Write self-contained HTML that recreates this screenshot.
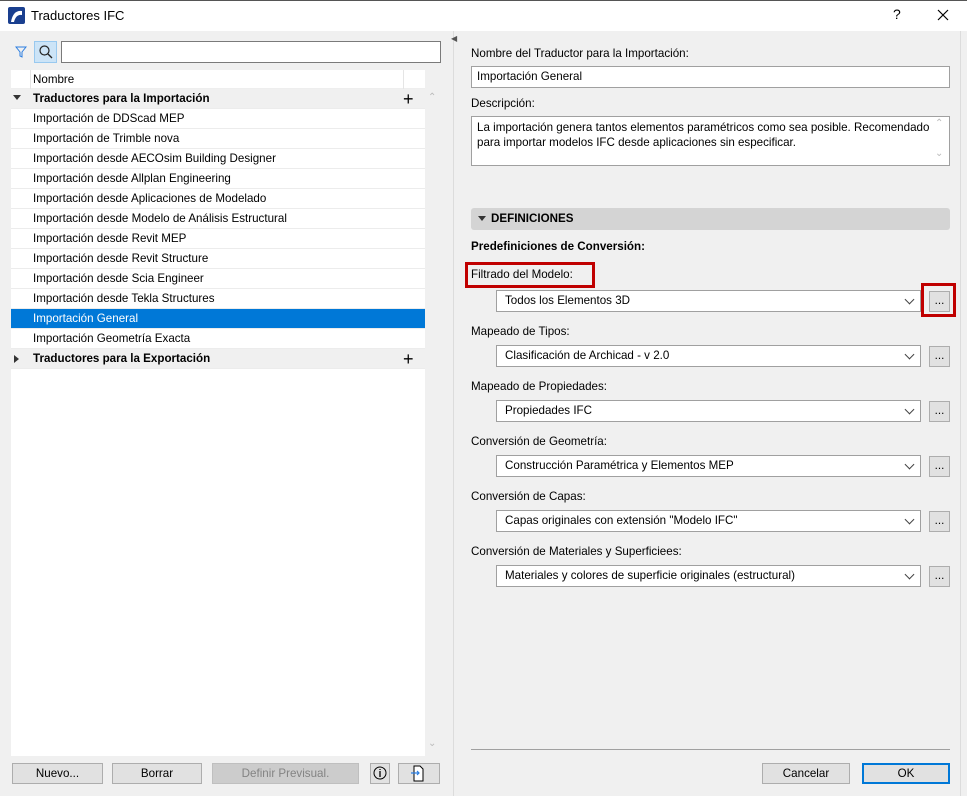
<!DOCTYPE html>
<html><head><meta charset="utf-8"><style>
*{box-sizing:border-box;margin:0;padding:0}
body{width:967px;height:796px;overflow:hidden;background:#f0f0f0;font-family:"Liberation Sans",sans-serif;font-size:11.6px;color:#000;position:relative}
.a{position:absolute}
.title{left:0;top:0;width:967px;height:31px;background:#fff;border-top:1px solid #555;}
.row{position:absolute;left:11px;width:414px;height:20px;line-height:20px;padding-left:22px;border-bottom:1px solid #ececec;background:#fff}
.grp{background:#f0f0f0;font-weight:bold}
.btn{position:absolute;height:21px;border:1px solid #adadad;background:#e1e1e1;text-align:center;line-height:19px}
.inp{position:absolute;background:#fff;border:1px solid #a0a0a0;height:22px;line-height:20px;padding-left:5px}
.dd{position:absolute;left:496px;width:425px;height:22px;background:#fff;border:1px solid #a0a0a0;line-height:20px;padding-left:8px}
.dd:after{content:"";position:absolute;right:7px;top:5px;width:6px;height:6px;border-right:1px solid #444;border-bottom:1px solid #444;transform:rotate(45deg)}
.dots{position:absolute;left:929px;width:21px;height:21px;border:1px solid #adadad;background:#e1e1e1;text-align:center;line-height:17px}
.lbl{position:absolute;left:471px}
</style></head><body>
<div class="a title"></div>
<svg class="a" style="left:8px;top:7px" width="17" height="17"><rect width="17" height="17" rx="2" fill="#1a3f8f"/><path d="M3 15 Q5 3 14 4 L14 8 Q8 7 6 15Z" fill="#fff"/></svg>
<div class="a" style="left:31px;top:8px;font-size:13px">Traductores IFC</div>
<div class="a" style="left:893px;top:6px;font-size:14px">?</div>
<svg class="a" style="left:937px;top:9px" width="12" height="12"><path d="M1 1L11 11M11 1L1 11" stroke="#000" stroke-width="1.2"/></svg>

<svg class="a" style="left:15px;top:45px" width="12" height="14"><path d="M1 2H11L7 7V12L5 11V7Z" fill="none" stroke="#2a7de0"/></svg>
<div class="a" style="left:34px;top:41px;width:23px;height:22px;background:#cce4f7;border:1px solid #99c9ef"></div>
<svg class="a" style="left:38px;top:44px" width="16" height="16"><circle cx="6.5" cy="6.5" r="4.5" fill="none" stroke="#222" stroke-width="1.2"/><path d="M10 10L14 14" stroke="#222" stroke-width="1.3"/></svg>
<div class="a" style="left:61px;top:41px;width:380px;height:22px;background:#fff;border:1px solid #7a7a7a"></div>

<div class="a" style="left:11px;top:70px;width:414px;height:686px;background:#fff"></div>
<div class="a" style="left:425px;top:89px;width:15px;height:667px;background:#f0f0f0"></div>
<div class="a" style="left:428px;top:92px;color:#bbb;font-size:10px">⌃</div>
<div class="a" style="left:428px;top:738px;color:#bbb;font-size:10px">⌄</div>
<div class="a" style="left:11px;top:70px;width:414px;height:19px;background:#fff;border-bottom:1px solid #eee"></div>
<div class="a" style="left:30px;top:70px;width:1px;height:19px;background:#e5e5e5"></div>
<div class="a" style="left:403px;top:70px;width:1px;height:19px;background:#e5e5e5"></div>
<div class="a" style="left:33px;top:73px">Nombre</div>

<div class="row grp" style="top:89px">Traductores para la Importación</div>
<svg class="a" style="left:13px;top:95px" width="8" height="6"><path d="M0 0H8L4 5Z" fill="#333"/></svg>
<div class="a" style="left:403px;top:89px;font-size:18px;line-height:20px">+</div>
<div class="row" style="top:109px">Importación de DDScad MEP</div>
<div class="row" style="top:129px">Importación de Trimble nova</div>
<div class="row" style="top:149px">Importación desde AECOsim Building Designer</div>
<div class="row" style="top:169px">Importación desde Allplan Engineering</div>
<div class="row" style="top:189px">Importación desde Aplicaciones de Modelado</div>
<div class="row" style="top:209px">Importación desde Modelo de Análisis Estructural</div>
<div class="row" style="top:229px">Importación desde Revit MEP</div>
<div class="row" style="top:249px">Importación desde Revit Structure</div>
<div class="row" style="top:269px">Importación desde Scia Engineer</div>
<div class="row" style="top:289px">Importación desde Tekla Structures</div>
<div class="row" style="top:309px;background:#0078d7;color:#fff">Importación General</div>
<div class="row" style="top:329px">Importación Geometría Exacta</div>
<div class="row grp" style="top:349px">Traductores para la Exportación</div>
<svg class="a" style="left:14px;top:355px" width="6" height="8"><path d="M0 0V8L5 4Z" fill="#333"/></svg>
<div class="a" style="left:403px;top:349px;font-size:18px;line-height:20px">+</div>

<div class="btn" style="left:12px;top:763px;width:91px">Nuevo...</div>
<div class="btn" style="left:112px;top:763px;width:90px">Borrar</div>
<div class="btn" style="left:212px;top:763px;width:147px;color:#838383;background:#ccc;border-color:#bfbfbf">Definir Previsual.</div>
<div class="btn" style="left:370px;top:763px;width:20px"></div>
<svg class="a" style="left:373px;top:765px" width="14" height="16"><circle cx="7" cy="8" r="6" fill="none" stroke="#000"/><path d="M7 6V12M7 4V5" stroke="#000" stroke-width="1.3"/></svg>
<div class="btn" style="left:398px;top:763px;width:42px"></div>
<svg class="a" style="left:410px;top:765px" width="16" height="17"><path d="M4 1H10L13 4V16H4Z" fill="#fff" stroke="#000"/><path d="M1 8H9M7 6L9 8L7 10" fill="none" stroke="#2a7de0" stroke-width="1.2"/></svg>

<div class="a" style="left:453px;top:31px;width:1px;height:765px;background:#dcdcdc"></div>
<div class="a" style="left:451px;top:34px;font-size:8px;color:#555">◀</div>
<div class="a" style="left:960px;top:31px;width:1px;height:765px;background:#dcdcdc"></div>

<div class="lbl" style="top:47px">Nombre del Traductor para la Importación:</div>
<div class="inp" style="left:471px;top:66px;width:479px">Importación General</div>
<div class="lbl" style="top:97px">Descripción:</div>
<div class="inp" style="left:471px;top:116px;width:479px;height:50px;line-height:15px;padding-top:3px;padding-right:14px">La importación genera tantos elementos paramétricos como sea posible. Recomendado para importar modelos IFC desde aplicaciones sin especificar.</div>
<div class="a" style="left:935px;top:118px;color:#bbb;font-size:10px">⌃</div>
<div class="a" style="left:935px;top:148px;color:#bbb;font-size:10px">⌄</div>

<div class="a" style="left:471px;top:208px;width:479px;height:22px;background:#d4d4d4;border-radius:3px"></div>
<svg class="a" style="left:478px;top:216px" width="8" height="6"><path d="M0 0H8L4 5Z" fill="#333"/></svg>
<div class="a" style="left:491px;top:212px;font-weight:bold">DEFINICIONES</div>
<div class="lbl" style="top:240px;font-weight:bold">Predefiniciones de Conversión:</div>

<div class="lbl" style="top:268px">Filtrado del Modelo:</div>
<div class="dd" style="top:290px">Todos los Elementos 3D</div><div class="dots" style="top:291px">...</div>
<div class="a" style="left:465px;top:262px;width:130px;height:26px;border:3px solid #c00000"></div>
<div class="a" style="left:921px;top:283px;width:35px;height:34px;border:3px solid #c00000"></div>

<div class="lbl" style="top:325px">Mapeado de Tipos:</div>
<div class="dd" style="top:345px">Clasificación de Archicad - v 2.0</div><div class="dots" style="top:346px">...</div>
<div class="lbl" style="top:380px">Mapeado de Propiedades:</div>
<div class="dd" style="top:400px">Propiedades IFC</div><div class="dots" style="top:401px">...</div>
<div class="lbl" style="top:435px">Conversión de Geometría:</div>
<div class="dd" style="top:455px">Construcción Paramétrica y Elementos MEP</div><div class="dots" style="top:456px">...</div>
<div class="lbl" style="top:490px">Conversión de Capas:</div>
<div class="dd" style="top:510px">Capas originales con extensión "Modelo IFC"</div><div class="dots" style="top:511px">...</div>
<div class="lbl" style="top:545px">Conversión de Materiales y Superficiees:</div>
<div class="dd" style="top:565px">Materiales y colores de superficie originales (estructural)</div><div class="dots" style="top:566px">...</div>

<div class="a" style="left:471px;top:749px;width:479px;height:1px;background:#a0a0a0"></div>
<div class="btn" style="left:762px;top:763px;width:88px">Cancelar</div>
<div class="btn" style="left:862px;top:763px;width:88px;border:2px solid #0078d7;line-height:17px">OK</div>
</body></html>
